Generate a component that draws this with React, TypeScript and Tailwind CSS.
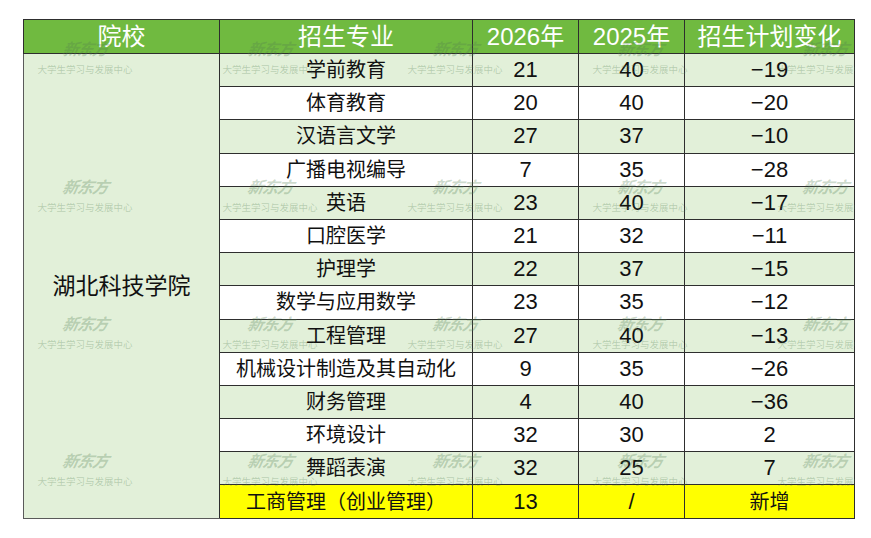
import React from 'react'

const rows: [string, string, string, string][] = [
    ['学前教育', '21', '40', '−19'],
    ['体育教育', '20', '40', '−20'],
    ['汉语言文学', '27', '37', '−10'],
    ['广播电视编导', '7', '35', '−28'],
    ['英语', '23', '40', '−17'],
    ['口腔医学', '21', '32', '−11'],
    ['护理学', '22', '37', '−15'],
    ['数学与应用数学', '23', '35', '−12'],
    ['工程管理', '27', '40', '−13'],
    ['机械设计制造及其自动化', '9', '35', '−26'],
    ['财务管理', '4', '40', '−36'],
    ['环境设计', '32', '30', '2'],
    ['舞蹈表演', '32', '25', '7'],
]

const marksX = [85, 270, 455, 640, 825]
const marksY = [42, 180, 317, 454]

function Watermark({ x, y }: { x: number; y: number }) {
    // faint logo stamp laid over the table
    return (
        <div
            className="absolute flex flex-col items-center -translate-x-1/2 text-[rgba(80,125,80,0.3)] pointer-events-none"
            style={{ left: x - 23, top: y - 19 }}
        >
            <span className="text-[16px] leading-[16px] font-bold italic tracking-[-1px] -skew-x-12">新东方</span>
            <span className="mt-[7px] text-[9.5px] leading-[10px] whitespace-nowrap">大学生学习与发展中心</span>
        </div>
    )
}

export default function App() {
    const cell = 'border border-[#2e2e2e] text-center align-middle p-0'
    return (
        <div
            className="w-[871px] h-[538px] bg-white pt-[19px] pl-[23px]"
            style={{ fontFamily: '"Liberation Sans", "Noto Sans CJK SC", sans-serif' }}
        >
            <div className="relative w-[832px] overflow-hidden">
                <table className="w-[831px] table-fixed border-collapse text-[#111]">
                    <colgroup>
                        <col className="w-[196px]" />
                        <col className="w-[253px]" />
                        <col className="w-[106px]" />
                        <col className="w-[106px]" />
                        <col className="w-[170px]" />
                    </colgroup>
                    <thead>
                        <tr className="h-[34px] bg-[#70ba40] text-white text-[24px] leading-none">
                            <th className={cell + ' font-normal'}>院校</th>
                            <th className={cell + ' font-normal'}>招生专业</th>
                            <th className={cell + ' font-normal'}>2026年</th>
                            <th className={cell + ' font-normal'}>2025年</th>
                            <th className={cell + ' font-normal'}>招生计划变化</th>
                        </tr>
                    </thead>
                    <tbody>
                        {rows.map((r, i) => (
                            <tr key={r[0]} className={'h-[33.2px] ' + (i % 2 === 0 ? 'bg-[#e2f0d9]' : 'bg-white')}>
                                {i === 0 && (
                                    <td rowSpan={14} className={cell + ' bg-[#e2f0d9] text-[23px] border-l-[#5a5a5a] border-b-[#5a5a5a]'}>
                                        湖北科技学院
                                    </td>
                                )}
                                <td className={cell + ' text-[20px] leading-none'}>{r[0]}</td>
                                <td className={cell + ' text-[22px] leading-none'}>{r[1]}</td>
                                <td className={cell + ' text-[22px] leading-none'}>{r[2]}</td>
                                <td className={cell + ' text-[22px] leading-none'}>{r[3]}</td>
                            </tr>
                        ))}
                        <tr className="h-[33.2px] bg-[#ffff00]">
                            <td className={cell + ' text-[20px] leading-none'}>工商管理（创业管理）</td>
                            <td className={cell + ' text-[22px] leading-none'}>13</td>
                            <td className={cell + ' text-[22px] leading-none'}>/</td>
                            <td className={cell + ' text-[20px] leading-none'}>新增</td>
                        </tr>
                    </tbody>
                </table>
                {marksY.map((y) => marksX.map((x) => <Watermark key={x + '-' + y} x={x} y={y} />))}
            </div>
        </div>
    )
}
